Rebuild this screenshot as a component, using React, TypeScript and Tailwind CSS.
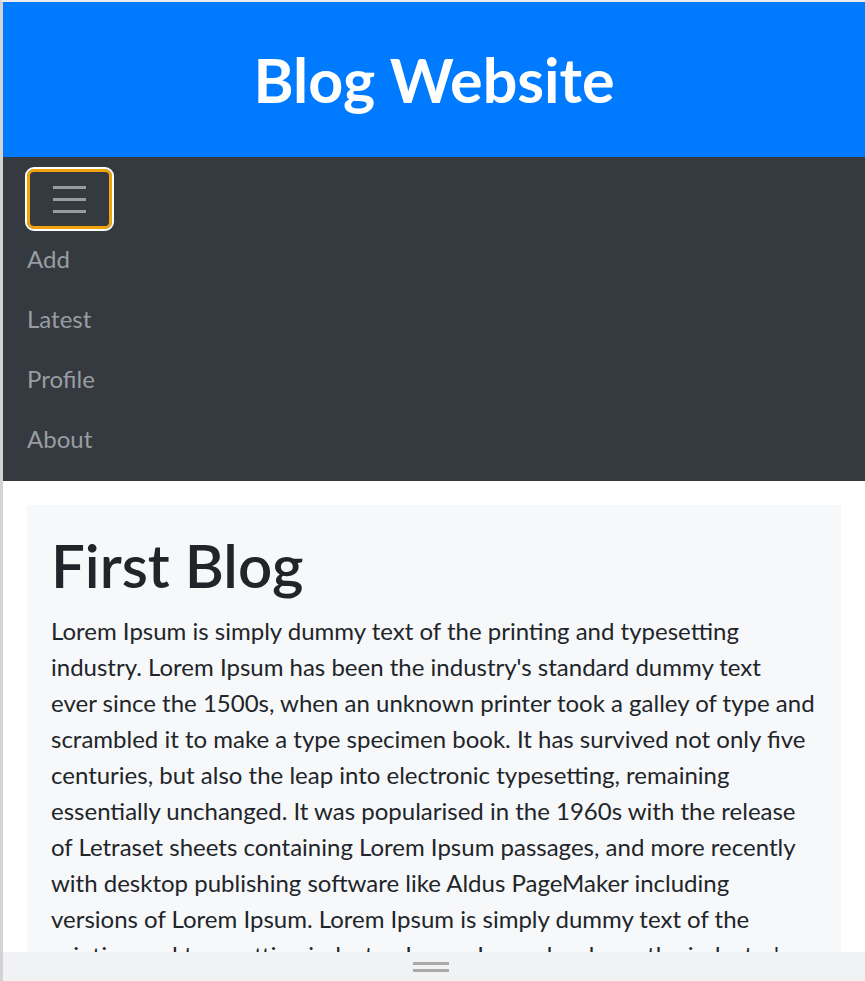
import React from 'react'

const lines = [
  'Lorem Ipsum is simply dummy text of the printing and typesetting',
  "industry. Lorem Ipsum has been the industry's standard dummy text",
  'ever since the 1500s, when an unknown printer took a galley of type and',
  'scrambled it to make a type specimen book. It has survived not only five',
  'centuries, but also the leap into electronic typesetting, remaining',
  'essentially unchanged. It was popularised in the 1960s with the release',
  'of Letraset sheets containing Lorem Ipsum passages, and more recently',
  'with desktop publishing software like Aldus PageMaker including',
  'versions of Lorem Ipsum. Lorem Ipsum is simply dummy text of the',
  "printing and typesetting industry. Lorem Ipsum has been the industry's",
  'standard dummy text ever since the 1500s, when an unknown printer took',
  'a galley of type and scrambled it to make a type specimen book.',
]

const links = ['Add', 'Latest', 'Profile', 'About']

function Toggler() {
  return (
    <button className="flex h-[60px] w-[85px] items-center justify-center rounded-[7px] border-[3px] border-[#f0a30a] outline-2 outline-white">
      <svg width="45" height="45" viewBox="0 0 30 30">
        <path d="M4 7h22M4 15h22M4 23h22" stroke="rgba(255,255,255,0.5)" strokeWidth="2" />
      </svg>
    </button>
  )
}

export default function App() {
  return (
    <div className="min-h-screen border-l-[3px] border-t-2 border-l-[#d3d3d3] border-t-[#ececec] bg-white font-['Lato',sans-serif] text-[#212529]">
      <header className="flex h-[155px] items-center justify-center bg-[#007bff]">
        <h1 className="text-[61px] font-bold leading-none text-white">Blog Website</h1>
      </header>

      <nav className="bg-[#343a40] px-6 pt-3 pb-3">
        <Toggler />
        <ul className="flex flex-col">
          {links.map((l) => (
            <li key={l} className="py-3 text-2xl leading-9 text-[#9a9da0]">{l}</li>
          ))}
        </ul>
      </nav>

      <main className="p-6 pb-0">
        <div className="bg-[#f7f8fa] px-6 pt-6 pb-6">
          <h1 className="mb-3 text-[60px] leading-[72px] font-semibold">First Blog</h1>
          <p className="text-2xl leading-9">
            {lines.map((t, i) => (
              <span key={i} className="block whitespace-nowrap">{t}</span>
            ))}
          </p>
        </div>
      </main>

      <div className="fixed right-0 bottom-0 left-[3px] flex h-[29px] items-center justify-center bg-[#f1f2f3]">
        <div className="flex flex-col gap-[4px] pr-[6px]">
          <span className="block h-[3px] w-9 bg-[#a9a9a9]" />
          <span className="block h-[3px] w-9 bg-[#a9a9a9]" />
        </div>
      </div>
    </div>
  )
}
